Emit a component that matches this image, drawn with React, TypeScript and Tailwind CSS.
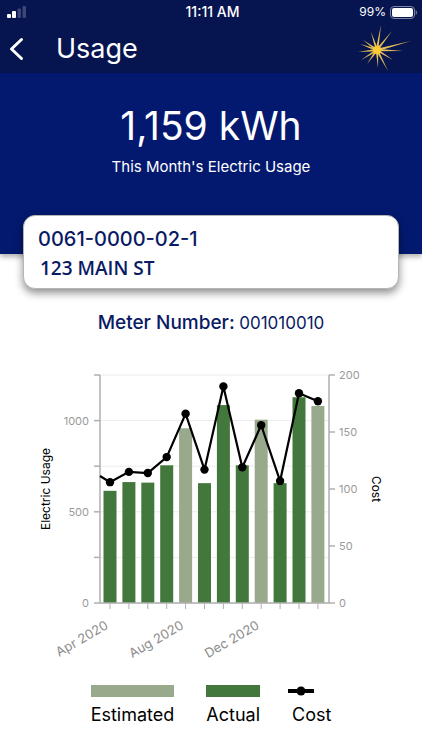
import { ReactNode } from 'react';

interface Reading {
  kwh: number;
  cost: number;
  estimated?: boolean;
}

const READINGS: Reading[] = [
  { kwh: 615, cost: 106 },
  { kwh: 663, cost: 115 },
  { kwh: 660, cost: 114 },
  { kwh: 755, cost: 128 },
  { kwh: 958, cost: 166, estimated: true },
  { kwh: 657, cost: 117 },
  { kwh: 1085, cost: 190 },
  { kwh: 755, cost: 119 },
  { kwh: 1005, cost: 156, estimated: true },
  { kwh: 657, cost: 107 },
  { kwh: 1128, cost: 184 },
  { kwh: 1080, cost: 177, estimated: true },
];

const MONTH_LABELS = [
  { index: 0, text: 'Apr 2020' },
  { index: 4, text: 'Aug 2020' },
  { index: 8, text: 'Dec 2020' },
];

// Plot area inside the chart's viewBox
const LEFT = 100;
const RIGHT = 329;
const TOP = 15;
const BOTTOM = 243;
const STEP = 18.9;
const BAR_WIDTH = 13;

const xAt = (i: number) => 110 + i * STEP;
const kwhY = (v: number) => BOTTOM - (v / 1250) * (BOTTOM - TOP);
const costY = (v: number) => BOTTOM - (v / 200) * (BOTTOM - TOP);

const RAYS = [
  [381, 25], [392, 31], [411, 41], [403, 51], [393, 60], [388, 71], [378, 68],
  [367, 64], [361, 60], [358, 52], [360, 44], [363, 40], [371, 32],
];

function Sunburst() {
  const cx = 377;
  const cy = 50;
  return (
    <svg viewBox="356 24 56 50" className="h-[50px] w-14" role="img" aria-label="Utility logo">
      {RAYS.map(([x, y]) => {
        const len = Math.hypot(x - cx, y - cy);
        const nx = (-(y - cy) / len) * 1.3;
        const ny = ((x - cx) / len) * 1.3;
        return (
          <polygon key={`${x}-${y}`} points={`${cx + nx},${cy + ny} ${x},${y} ${cx - nx},${cy - ny}`} fill="#e3bd55" />
        );
      })}
      <circle cx={cx} cy={cy} r="4" fill="#fccb35" />
    </svg>
  );
}

function StatusBar() {
  return (
    <div className="grid h-6 grid-cols-3 items-center pr-1 pl-[7px] text-xs">
      <svg viewBox="0 0 20 12" className="h-3 w-5" fill="#fff" aria-label="Signal strength">
        <rect x="0" y="8" width="4" height="4" rx="1" />
        <rect x="5" y="5" width="4" height="7" rx="1" />
        <rect x="10.5" y="2.5" width="3.5" height="9.5" rx="1" opacity="0.22" />
        <rect x="15.5" y="0" width="3.5" height="12" rx="1" opacity="0.22" />
      </svg>
      <span className="text-center text-sm/6 font-medium">11:11 AM</span>
      <div className="flex items-center justify-end gap-1">
        <span>99%</span>
        <svg viewBox="0 0 28 13" className="h-[13px] w-7" aria-label="Battery">
          <rect x="0.5" y="0.5" width="24" height="12" rx="3.5" fill="none" stroke="#7d83a5" />
          <rect x="2" y="2" width="21" height="9" rx="2" fill="#fff" />
          <path d="M26 4.5q1.5 2 0 4z" fill="#7d83a5" stroke="#7d83a5" strokeWidth="0.5" />
        </svg>
      </div>
    </div>
  );
}

function UsageChart() {
  const line = READINGS.map((r, i) => `${xAt(i)},${costY(r.cost)}`).join(' ');

  return (
    <svg
      viewBox="0 0 422 310"
      className="mx-auto block w-full max-w-xl font-['Inter',sans-serif]"
      role="img"
      aria-label="Electric usage and cost by month"
    >
      {/* Grid and left axis ticks */}
      {[0, 250, 500, 750, 1000, 1250].map((v) => (
        <g key={v}>
          <line x1={LEFT} x2={RIGHT} y1={kwhY(v)} y2={kwhY(v)} stroke="#ececec" />
          <line x1={LEFT - 6} x2={LEFT} y1={kwhY(v)} y2={kwhY(v)} stroke="#b0b0b0" strokeWidth="1.5" />
        </g>
      ))}
      {[0, 500, 1000].map((v) => (
        <text key={v} x="89" y={kwhY(v) + 4} textAnchor="end" fontSize="11" fill="#9a9a9a">
          {v}
        </text>
      ))}

      {READINGS.map((r, i) => (
        <rect
          key={i}
          x={xAt(i) - BAR_WIDTH / 2}
          y={kwhY(r.kwh)}
          width={BAR_WIDTH}
          height={BOTTOM - kwhY(r.kwh)}
          fill={r.estimated ? '#99aa8c' : '#43783c'}
        />
      ))}

      {/* Axes */}
      <path d={`M${LEFT} ${TOP}V${BOTTOM}H${RIGHT}V${TOP}`} fill="none" stroke="#b0b0b0" strokeWidth="1.5" />
      {READINGS.map((_, i) => (
        <line key={i} x1={xAt(i)} x2={xAt(i)} y1={BOTTOM} y2={BOTTOM + 6} stroke="#b0b0b0" />
      ))}
      {[0, 50, 100, 150, 200].map((v) => (
        <g key={v}>
          <line x1={RIGHT} x2={RIGHT + 6} y1={costY(v)} y2={costY(v)} stroke="#b0b0b0" strokeWidth="1.5" />
          <text x="339" y={costY(v) + 4} fontSize="11" fill="#9a9a9a">
            {v}
          </text>
        </g>
      ))}

      {/* Cost line */}
      <polyline points={`${LEFT},116 ${line}`} fill="none" stroke="#000" strokeWidth="2.2" />
      {READINGS.map((r, i) => (
        <circle key={i} cx={xAt(i)} cy={costY(r.cost)} r="4.2" />
      ))}

      {MONTH_LABELS.map(({ index, text }) => (
        <text
          key={text}
          x={xAt(index) - 1}
          y="268"
          textAnchor="end"
          fontSize="13"
          fill="#8c8c8c"
          transform={`rotate(-30 ${xAt(index) - 1} 268)`}
        >
          {text}
        </text>
      ))}

      <text x="50" y="129" textAnchor="middle" fontSize="12" transform="rotate(-90 50 129)">
        Electric Usage
      </text>
      <text x="372" y="129" textAnchor="middle" fontSize="12" transform="rotate(90 372 129)">
        Cost
      </text>
    </svg>
  );
}

function LegendItem({ label, children }: { label: string; children: ReactNode }) {
  return (
    <li className="flex flex-col gap-1">
      <div className="flex h-3 items-center">{children}</div>
      <span className="text-lg/7">{label}</span>
    </li>
  );
}

export default function App() {
  return (
    <div className="min-h-screen bg-white font-['Inter',sans-serif] text-black">
      <header className="h-[73px] bg-[#06144f] text-white">
        <StatusBar />
        <div className="flex items-center pr-2.5 pl-2">
          <button type="button" aria-label="Back" className="flex h-12 w-12 items-center">
            <svg viewBox="0 0 16 24" className="h-6 w-4" fill="none" stroke="#fff" strokeWidth="3" strokeLinecap="round" strokeLinejoin="round">
              <path d="M13.5 2.5 3.5 12l10 9.5" />
            </svg>
          </button>
          <h1 className="flex-1 text-[27px]/[48px] font-normal">Usage</h1>
          <Sunburst />
        </div>
      </header>

      <section className="h-[181px] bg-[#03196f] pt-7 text-center text-white shadow-[0_3px_5px_rgba(0,0,0,0.3)]">
        <p className="text-[39px]/[50px] font-normal">1,159 kWh</p>
        <p className="mt-1 text-[15px]/6">This Month's Electric Usage</p>
      </section>

      <section className="relative mx-[23px] -mt-[39px] rounded-xl border border-[#b5b5b5] bg-white px-3.5 pt-2 pb-1.5 text-[#0a1a64] shadow-[0_4px_8px_rgba(0,0,0,0.45)]">
        <p className="text-xl/[30px] font-medium">0061-0000-02-1</p>
        <p className="pl-0.5 font-['Open_Sans',sans-serif] text-[19px]/7 font-semibold">123 MAIN ST</p>
      </section>

      <p className="mt-5 text-center text-[#0a1a64]">
        <span className="text-[19px]/7 font-medium">Meter Number:</span> <span className="text-[17px]">001010010</span>
      </p>

      <main className="mt-[23px]">
        <UsageChart />
        <ul className="mt-[15px] flex justify-center gap-8 pb-5">
          <LegendItem label="Estimated">
            <span className="h-3 w-full bg-[#99aa8c]" />
          </LegendItem>
          <LegendItem label="Actual">
            <span className="h-3 w-full bg-[#43783c]" />
          </LegendItem>
          <LegendItem label="Cost">
            <svg viewBox="0 0 26 10" className="-ml-1 h-2.5 w-[26px]">
              <rect y="3" width="26" height="4" />
              <circle cx="13" cy="5" r="4.5" />
            </svg>
          </LegendItem>
        </ul>
      </main>
    </div>
  );
}
